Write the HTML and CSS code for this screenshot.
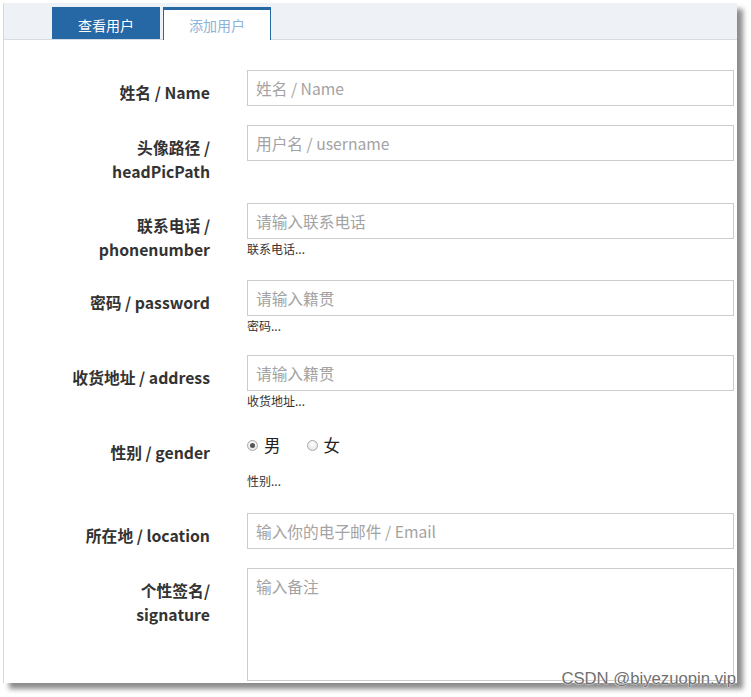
FILE: index.html
```html
<!DOCTYPE html>
<html lang="zh-CN">
<head>
<meta charset="utf-8">
<title>添加用户</title>
<link rel="stylesheet" href="styles.css">
</head>
<body>
<div class="frame">
  <div class="tabbar">
    <a class="tab tab-active">查看用户</a>
    <a class="tab tab-current">添加用户</a>
  </div>
  <form class="form">
    <div class="row">
      <label class="label">姓名 / Name</label>
      <div class="ctrl"><input class="input" placeholder="姓名 / Name"></div>
    </div>
    <div class="row">
      <label class="label">头像路径 /<br>headPicPath</label>
      <div class="ctrl"><input class="input" placeholder="用户名 / username"></div>
    </div>
    <div class="row row-tight">
      <label class="label">联系电话 /<br>phonenumber</label>
      <div class="ctrl"><input class="input" placeholder="请输入联系电话"><div class="help">联系电话...</div></div>
    </div>
    <div class="row">
      <label class="label">密码 / password</label>
      <div class="ctrl"><input class="input" placeholder="请输入籍贯"><div class="help">密码...</div></div>
    </div>
    <div class="row">
      <label class="label">收货地址 / address</label>
      <div class="ctrl"><input class="input" placeholder="请输入籍贯"><div class="help">收货地址...</div></div>
    </div>
    <div class="row">
      <label class="label">性别 / gender</label>
      <div class="ctrl">
        <div class="radios">
          <label class="radio-item"><input type="radio" name="sex" class="radio" checked><span>男</span></label>
          <label class="radio-item"><input type="radio" name="sex" class="radio"><span>女</span></label>
        </div>
        <div class="help help-gender">性别...</div>
      </div>
    </div>
    <div class="row">
      <label class="label">所在地 / location</label>
      <div class="ctrl"><input class="input" placeholder="输入你的电子邮件 / Email"></div>
    </div>
    <div class="row row-last">
      <label class="label">个性签名/<br>signature</label>
      <div class="ctrl"><textarea class="textarea" placeholder="输入备注"></textarea></div>
    </div>
  </form>
</div>
<div class="watermark">CSDN @biyezuopin.vip</div>
</body>
</html>
```

FILE: styles.css
```css
* { box-sizing: border-box; }

html, body {
  margin: 0;
  padding: 0;
  background: #ffffff;
}

body {
  position: relative;
  width: 751px;
  height: 697px;
  overflow: hidden;
  font-family: "Noto Sans CJK SC", "Open Sans", sans-serif;
  color: #333333;
}

.frame {
  margin: 3px 0 0 3px;
  width: 734px;
  height: 680px;
  background: #ffffff;
  border-left: 1px solid #d8d8d8;
  box-shadow: 6px 6px 5px rgba(0, 0, 0, 0.45);
  overflow: hidden;
}

.tabbar {
  display: flex;
  align-items: flex-end;
  gap: 3px;
  height: 37px;
  padding-left: 48px;
  background: #eef1f6;
  border-bottom: 1px solid #d6dce4;
}

.tab {
  display: flex;
  align-items: center;
  justify-content: center;
  width: 108px;
  height: 32px;
  padding-top: 3px;
  font-size: 14px;
  line-height: 20px;
  text-decoration: none;
}

.tab-active {
  background: #2667a6;
  color: #ffffff;
}

.tab-current {
  height: 33px;
  margin-bottom: -1px;
  background: #ffffff;
  color: #8cb3da;
  border-top: 3px solid #2667a6;
  border-left: 1px solid #2667a6;
  border-right: 1px solid #2667a6;
  padding-top: 0;
}

.form {
  padding: 30px 3px 0 0;
}

.row {
  display: grid;
  grid-template-columns: 206px 1fr;
  column-gap: 37px;
  margin-bottom: 19px;
}

.row-tight { margin-bottom: 18px; }

.row-last { margin-bottom: 0; }

.label {
  text-align: right;
  font-weight: bold;
  font-size: 15.8px;
  line-height: 24px;
  padding-top: 11px;
  color: #333333;
}

.ctrl {
  display: flex;
  flex-direction: column;
}

.input,
.textarea {
  display: block;
  width: 100%;
  height: 36px;
  border: 1px solid #cccccc;
  border-radius: 0;
  padding: 0 8px;
  font-family: "Noto Sans CJK SC", "Open Sans", sans-serif;
  font-size: 15.7px;
  color: #333333;
  background: #ffffff;
  outline: none;
}

.textarea {
  height: 113px;
  padding: 7px 8px;
  line-height: 22px;
  resize: none;
}

.input::placeholder,
.textarea::placeholder {
  color: #a3a3a3;
}

.help {
  margin-top: 0;
  font-size: 12px;
  line-height: 20px;
  color: #333333;
}

.help-gender {
  margin: 11px 0 3px;
}

.radios {
  display: flex;
  align-items: center;
  height: 30px;
  gap: 26px;
}

.radio-item {
  display: flex;
  align-items: center;
  gap: 6px;
  font-size: 16.5px;
  color: #222222;
}

.radio {
  appearance: none;
  -webkit-appearance: none;
  margin: 0;
  width: 11px;
  height: 11px;
  border-radius: 50%;
  border: 1px solid #a9a9a9;
  background: radial-gradient(circle at 50% 35%, #ffffff 0%, #e0e0e0 100%);
  position: relative;
}

.radio:checked::after {
  content: "";
  position: absolute;
  left: 2px;
  top: 2px;
  width: 5px;
  height: 5px;
  border-radius: 50%;
  background: #555555;
}

.watermark {
  position: absolute;
  right: 15px;
  bottom: 8px;
  font-family: "Liberation Sans", Arial, sans-serif;
  font-size: 16.7px;
  line-height: 20px;
  color: #707070;
  text-shadow: 0 0 2px #ffffff, 0 0 1px #ffffff;
}
```
